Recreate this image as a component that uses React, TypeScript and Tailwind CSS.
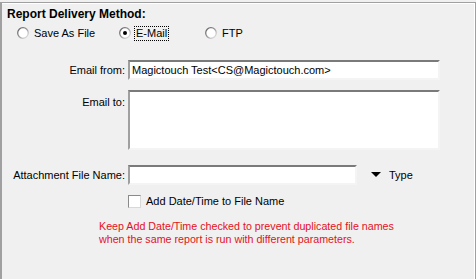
function Radio({ checked }: { checked?: boolean }) {
  return (
    <svg width="12" height="12" viewBox="0 0 12 12" className="shrink-0">
      <defs>
        <linearGradient id="rg" x1="0" y1="0" x2="1" y2="1">
          <stop offset="0" stopColor="#5a5a5a" />
          <stop offset="0.5" stopColor="#9a9a9a" />
          <stop offset="1" stopColor="#f0f0f0" />
        </linearGradient>
      </defs>
      <circle cx="6" cy="6" r="5.3" fill="#fff" stroke="url(#rg)" strokeWidth="1.3" />
      {checked && <circle cx="6" cy="6" r="2" fill="#000" />}
    </svg>
  );
}

const sunken =
  "bg-white border-2 border-t-[#7a7a7a] border-l-[#a0a0a0] border-b-[#f4f4f4] border-r-[#f4f4f4]";

export default function App() {
  return (
    <div className="w-[476px] h-[279px] bg-[#f0f0f0] pt-[2px] font-['Liberation_Sans',Arial,sans-serif] text-[11px] text-black overflow-hidden">
      <div className="h-[290px] border-t border-l-2 border-r border-[#a0a0a0] shadow-[inset_0_1px_0_#fff,inset_-1px_0_0_#fff]">
        {/* Delivery method */}
        <div className="pl-[5px] pt-[4px] font-bold text-[12px] leading-[14px]">Report Delivery Method:</div>
        <div className="flex items-center h-[16px] mt-[4px] pl-[15px]">
          <label className="flex items-center gap-[5px] w-[102px]">
            <Radio />
            <span>Save As File</span>
          </label>
          <label className="flex items-center gap-[4px] w-[86px]">
            <Radio checked />
            <span className="outline outline-1 outline-dotted outline-black px-[1px] leading-[13px]">E-Mail</span>
          </label>
          <label className="flex items-center gap-[5px]">
            <Radio />
            <span>FTP</span>
          </label>
        </div>

        {/* Email fields */}
        <div className="flex items-center mt-[19px] gap-[3px]">
          <div className="w-[123px] text-right">Email from:</div>
          <div className={`${sunken} w-[312px] h-[20px] pl-[2px] leading-[16px]`}>
            Magictouch Test&lt;CS@Magictouch.com&gt;
          </div>
        </div>
        <div className="flex items-start mt-[10px] gap-[3px]">
          <div className="w-[123px] text-right pt-[4px]">Email to:</div>
          <div className={`${sunken} w-[312px] h-[60px]`} />
        </div>

        {/* Attachment */}
        <div className="flex items-center mt-[15px] gap-[3px]">
          <div className="w-[123px] text-right">Attachment File Name:</div>
          <div className={`${sunken} w-[229px] h-[20px]`} />
          <svg width="10" height="6" viewBox="0 0 10 6" className="ml-[11px]">
            <polygon points="0,0 10,0 5,5" fill="#000" />
          </svg>
          <span className="ml-[5px]">Type</span>
        </div>
        <div className="flex items-center mt-[8px] pl-[126px] gap-[5px]">
          <div className="w-[13px] h-[13px] bg-white border border-t-[#8a8a8a] border-l-[#8a8a8a] border-b-[#d8d8d8] border-r-[#d8d8d8]" />
          <span>Add Date/Time to File Name</span>
        </div>

        <div className="mt-[10px] pl-[97px] text-[#e3101e] leading-[13px] text-[10.7px]">
          <div>Keep Add Date/Time checked to prevent duplicated file names</div>
          <div>when the same report is run with different parameters.</div>
        </div>
      </div>
    </div>
  );
}
